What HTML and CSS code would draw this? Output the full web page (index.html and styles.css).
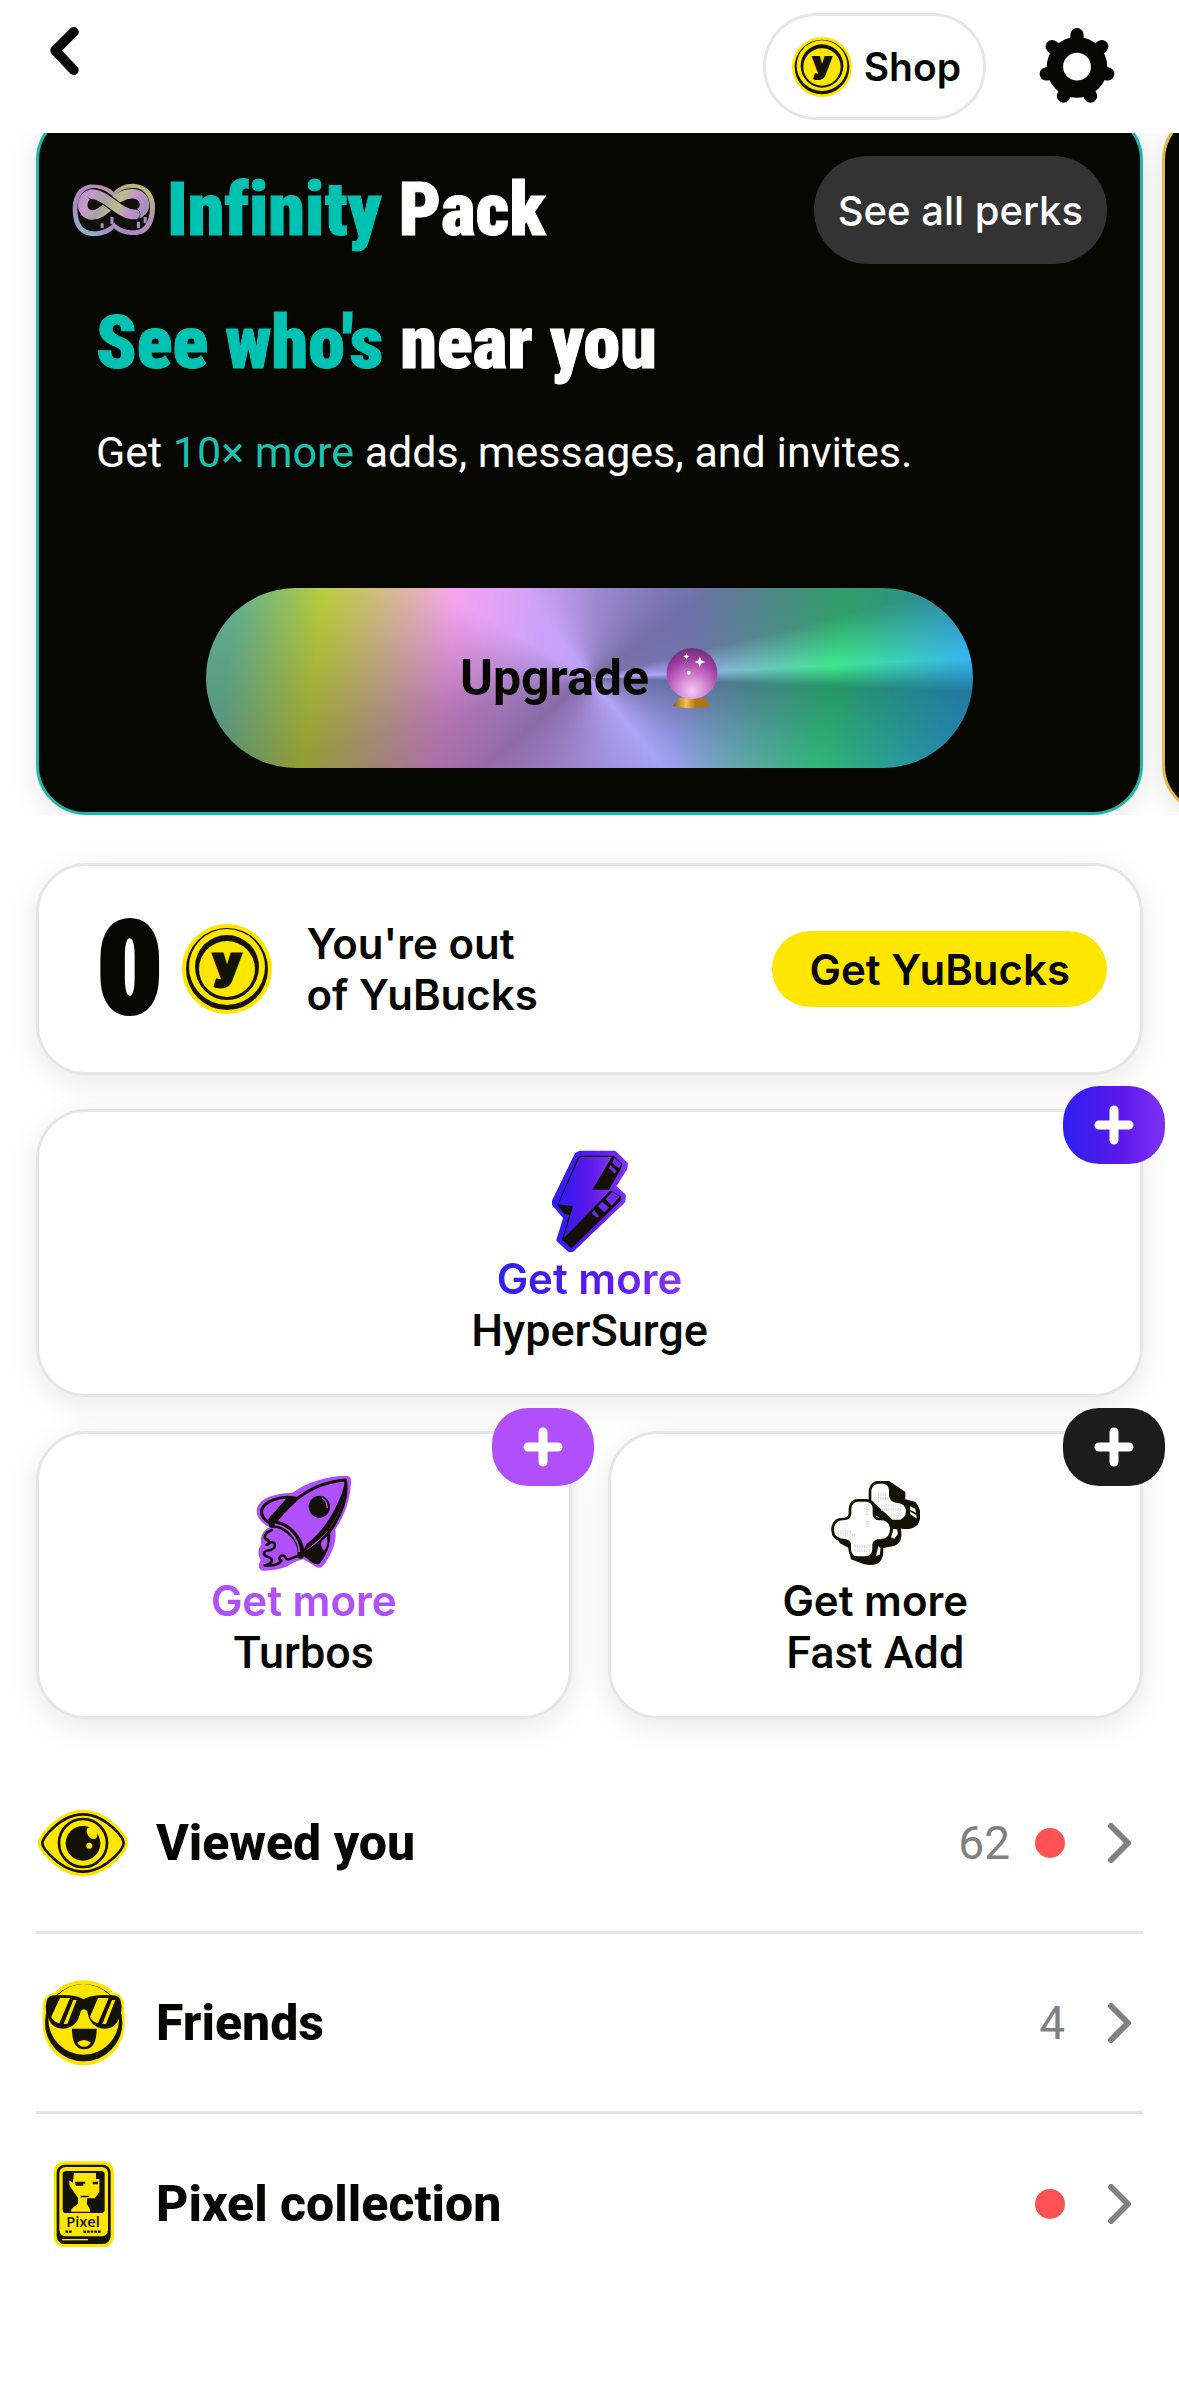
FILE: index.html
```
<!DOCTYPE html>
<html lang="en">
<head>
<meta charset="utf-8">
<meta name="viewport" content="width=device-width, initial-scale=1">
<title>Profile</title>
<link rel="stylesheet" href="styles.css">
</head>
<body>
<svg class="defs" aria-hidden="true">
  <defs>
    <linearGradient id="violet" x1="0" x2="1"><stop offset="0" stop-color="#2d1df2"/><stop offset=".55" stop-color="#5a18ea"/><stop offset="1" stop-color="#7d33f5"/></linearGradient>
    <linearGradient id="holo" gradientUnits="userSpaceOnUse" x1="50" y1="90" x2="270" y2="210"><stop offset="0" stop-color="#a98bb4"/><stop offset=".2" stop-color="#c99ad0"/><stop offset=".36" stop-color="#a9a0a8"/><stop offset=".52" stop-color="#b9c08a"/><stop offset=".68" stop-color="#c58fd0"/><stop offset=".82" stop-color="#9f93b8"/><stop offset="1" stop-color="#b288d6"/></linearGradient>
    <linearGradient id="rim" x1="0" y1="1" x2="1" y2="0"><stop offset="0" stop-color="#7fc4c4"/><stop offset=".3" stop-color="#a48cc4"/><stop offset=".6" stop-color="#b58ab8"/><stop offset="1" stop-color="#b4cc62"/></linearGradient>
    <radialGradient id="orb" cx=".5" cy=".85" r=".9"><stop offset="0" stop-color="#f6c8f4"/><stop offset=".35" stop-color="#cf7fcf"/><stop offset=".7" stop-color="#9a3c9c"/><stop offset="1" stop-color="#6a2a70"/></radialGradient>
    <linearGradient id="gold" x1="0" x2="1"><stop offset="0" stop-color="#8a5a14"/><stop offset=".35" stop-color="#f0c04a"/><stop offset=".6" stop-color="#b07818"/><stop offset="1" stop-color="#a87420"/></linearGradient>
    <symbol id="coin" viewBox="0 0 90 90">
      <circle cx="45" cy="45" r="45" fill="#ffe600"/>
      <circle cx="45" cy="45" r="41" fill="#141200"/>
      <circle cx="45" cy="43" r="38" fill="#ffe600"/>
      <circle cx="45" cy="43" r="32" fill="#141200"/>
      <circle cx="45" cy="45" r="28" fill="#ffe600"/>
      <circle cx="45" cy="45" r="30" fill="none" stroke="#141200" stroke-width="2"/>
      <text x="45" y="54" text-anchor="middle" class="coin-letter">y</text>
    </symbol>
    <symbol id="plus" viewBox="0 0 40 40"><path d="M20 5v30M5 20h30" fill="none" stroke="#fff" stroke-width="9" stroke-linecap="round"/></symbol>
    <symbol id="chevron" viewBox="0 0 24 40"><path d="M4 3l17 17L4 37" fill="none" stroke="#808080" stroke-width="6" stroke-linecap="round" stroke-linejoin="round"/></symbol>
  </defs>
</svg>

<header class="topbar">
  <button class="back" aria-label="Back"><svg viewBox="0 0 32 52"><path d="M26 6L7 25L26 45" fill="none" stroke="#050700" stroke-width="10" stroke-linecap="round" stroke-linejoin="round"/></svg></button>
  <button class="shop"><svg class="shop-coin"><use href="#coin"/></svg>Shop</button>
  <button class="settings" aria-label="Settings">
    <svg viewBox="835 45 230 236" fill="#050700"><circle cx="950" cy="170" r="92"/><g stroke="#050700" stroke-width="40" stroke-linecap="round"><path d="M950 170V71M950 170L1025 107M950 170L1043 190M950 170L991 257M950 170L909 257M950 170L857 190M950 170L875 107"/></g><circle cx="950" cy="168" r="42" fill="#fff"/></svg>
  </button>
</header>

<section class="carousel">
  <article class="pack">
    <div class="pack-head">
      <svg class="pack-icon" viewBox="40 72 248 158">
        <path d="M100 76C130 76 150 86 163 98C178 82 200 72 225 74C262 77 287 105 285 145C284 195 262 226 222 225C195 225 178 218 164 205C150 222 128 228 102 228C62 226 42 195 42 150C42 105 65 76 100 76z" fill="url(#rim)"/>
        <path d="M56 150C56 108 74 88 102 87C132 87 150 100 163 114C180 92 202 84 225 86C254 88 272 112 270 148C268 190 250 212 222 211C196 211 178 203 164 188C150 204 128 214 102 214C70 212 57 188 56 150z" fill="#11110b"/>
        <g fill="none" stroke-linecap="round">
          <path d="M102 104C64 104 60 164 100 166C140 166 164 103 218 103C264 104 266 162 224 164" stroke="url(#holo)" stroke-width="28"/>
          <path d="M102 104C142 104 176 164 224 164" stroke="#11110b" stroke-width="36"/>
          <path d="M98 104C142 104 176 164 226 164" stroke="url(#holo)" stroke-width="29"/>
          <path d="M129 190V204M158 172V192M236 186V204M256 172V190" stroke="#a48cc8" stroke-width="9" stroke-linecap="butt"/>
        </g>
      </svg>
      <h2 class="pack-name"><span class="teal">Infinity</span> Pack</h2>
      <button class="perks">See all perks</button>
    </div>
    <h3 class="pack-title"><span class="teal">See who's</span> near you</h3>
    <p class="pack-text">Get <span class="teal-soft">10× more</span> adds, messages, and invites.</p>
    <button class="upgrade">Upgrade
      <svg class="ball" viewBox="75 45 162 190"><path d="M118 200H196L214 226Q156 240 97 226z" fill="url(#gold)"/><circle cx="156" cy="126" r="78" fill="url(#orb)"/><g fill="#fff"><path d="M180 74L185 86L197 91L185 95L180 106L175 95L163 91L175 86z"/><path d="M139 64l3 7l7 3l-7 3l-3 7l-3-7l-7-3l7-3z"/><circle cx="146" cy="124" r="6"/></g></svg>
    </button>
  </article>
  <article class="pack pack-next" aria-label="Next pack"></article>
</section>

<main class="content">
  <section class="card balance">
    <span class="amount">0</span>
    <svg class="balance-coin"><use href="#coin"/></svg>
    <p class="balance-text">You're out<br>of YuBucks</p>
    <button class="get-bucks">Get YuBucks</button>
  </section>

  <section class="boosts">
    <div class="card boost boost-wide">
      <svg class="boost-icon" width="78" height="104" viewBox="94 50 234 312">
        <path d="M182 60H285L320 94L318 108L284 162L314 190L312 207L158 354L148 354L115 323L136 256L102 216L102 206L170 66z" fill="url(#violet)" stroke="url(#violet)" stroke-width="10" stroke-linejoin="round"/>
        <path d="M184 70H282L308 95L304 110L268 172L305 192L302 206L155 348L127 322L148 248L134 244L113 218L174 76z" fill="#141008"/>
        <path d="M186 74H276L218 172H274L132 318L160 222L116 216L178 78z" fill="url(#violet)"/>
        <path d="M284 76L305 95L298 108L277 92zM272 98L291 116L286 124L268 108zM279 178L300 194L276 220L258 200zM248 208L268 226L254 240L235 222zM224 234L238 252L232 257L216 242z" fill="#6a2cf0"/>
      </svg>
      <p class="more more-hyper">Get more</p>
      <p class="boost-name">HyperSurge</p>
      <button class="add add-hyper" aria-label="Add HyperSurge"><svg><use href="#plus"/></svg></button>
    </div>
    <div class="card boost">
      <svg class="boost-icon" width="96" height="98" viewBox="50 40 288 294">
        <path d="M320 45C337 45 337 60 334 78C330 120 318 160 288 206C292 240 282 270 262 300C250 322 240 326 226 316C212 308 204 302 192 296C160 302 150 318 130 322C112 328 90 330 70 330C56 328 56 312 64 298C54 282 56 262 66 252C60 226 74 208 90 200C62 186 46 160 54 140C64 112 104 98 160 96C205 62 268 46 320 45z" fill="#b050fa"/>
        <path d="M318 58C268 62 220 78 176 112C150 136 120 165 100 195C140 198 180 240 186 284C225 262 262 230 282 196C310 150 326 100 318 58z" fill="#b050fa" stroke="#141008" stroke-width="9" stroke-linejoin="round"/>
        <path d="M318 60C322 110 300 160 268 208C240 238 208 262 184 282L202 250C250 215 290 150 310 90z" fill="#141008"/>
        <path d="M166 112C118 104 76 124 68 146C62 162 76 180 94 188C120 168 140 140 166 112z" fill="#b050fa" stroke="#141008" stroke-width="9"/>
        <path d="M166 110L142 112C122 136 100 160 86 176L100 192C124 170 150 136 166 110z" fill="#141008"/>
        <path d="M272 208C278 250 260 286 240 310C222 316 206 292 186 282C210 262 246 244 272 208z" fill="#141008"/>
        <path d="M262 228C268 246 262 260 254 270C246 262 242 250 248 240z" fill="#b050fa"/>
        <ellipse cx="240" cy="138" rx="32" ry="33" fill="#141008"/><path d="M248 112Q264 122 264 142" fill="none" stroke="#b050fa" stroke-width="4"/>
        <path d="M98 192C140 184 190 238 184 284" fill="none" stroke="#141008" stroke-width="20" stroke-linecap="round"/><path d="M106 192C146 194 178 236 180 274" fill="none" stroke="#b050fa" stroke-width="5"/>
        <path d="M98 208C78 214 72 230 80 236C92 238 92 252 82 252C100 236 112 248 104 262C92 276 74 262 74 280C78 292 96 286 98 298C98 310 78 314 76 314C100 316 118 312 126 300C110 292 132 276 138 290C144 304 156 290 178 286" fill="none" stroke="#141008" stroke-width="8" stroke-linecap="round" stroke-linejoin="round"/>
      </svg>
      <p class="more more-turbo">Get more</p>
      <p class="boost-name">Turbos</p>
      <button class="add add-turbo" aria-label="Add Turbos"><svg><use href="#plus"/></svg></button>
    </div>
    <div class="card boost">
      <svg class="boost-icon" width="90" height="86" viewBox="46 57 270 258" stroke-linejoin="round">
        <g stroke="#141200" stroke-width="8">
        <path d="M190 64H222L268 95V118L300 126C320 150 314 175 306 188C296 200 284 200 268 200L240 196L170 150V90Q172 66 190 64z" fill="#141200"/>
        <path d="M190 64H206Q226 66 227 88V104Q230 120 248 122Q276 124 278 150Q278 172 258 180H232L166 120V88Q170 66 190 64z" fill="#fff"/>
        <path d="M284 132L304 142L310 178L284 160z" fill="#fff" stroke-width="5"/><path d="M284 148L306 160" stroke-width="5"/>
        <path d="M54 205L80 245L106 258L112 292L150 306C190 314 204 300 202 258L240 250C262 240 258 210 250 188L220 176z" fill="#141200"/>
        <path d="M190 250L200 262L198 282L180 290zM234 200L250 204L252 220L240 236L226 230z" fill="#fff" stroke-width="5"/>
        <path d="M128 118H156Q176 120 178 142V160Q180 174 194 174Q228 172 230 204Q230 236 200 238Q178 238 177 250V264Q176 290 150 290H128Q106 288 105 264V250Q104 240 90 238Q54 236 54 206Q54 174 86 174Q104 174 106 158V142Q108 120 128 118z" fill="#fff"/>
        </g>
        <g fill="none" stroke="#d9d9d9" stroke-width="10" stroke-dasharray="3 4"><path d="M158 130V162M158 180V200M70 212H112M70 222H124M120 256H166M120 268H166M190 100H216M190 112H220M200 134H262M200 146H262M236 162H264"/></g>
      </svg>
      <p class="more">Get more</p>
      <p class="boost-name">Fast Add</p>
      <button class="add add-fast" aria-label="Add Fast Add"><svg><use href="#plus"/></svg></button>
    </div>
  </section>

  <nav class="list">
    <a class="row" href="#viewed">
      <svg class="row-icon" viewBox="52 19 282 282">
        <path d="M57 160Q60 140 82 118Q135 60 193 60Q252 60 305 118Q328 142 328 160Q328 178 305 202Q252 260 193 260Q135 260 82 202Q58 178 57 160z" fill="#ffe600"/>
        <path d="M71 160Q72 148 90 128Q140 74 193 74Q246 74 297 128Q314 146 315 160Q314 174 297 192Q246 246 193 246Q140 246 90 192Q72 174 71 160z" fill="none" stroke="#141200" stroke-width="8"/>
        <circle cx="193" cy="160" r="72" fill="none" stroke="#141200" stroke-width="8"/><circle cx="193" cy="161" r="52" fill="#141200"/>
        <ellipse cx="220" cy="130" rx="14" ry="20" transform="rotate(-35 220 130)" fill="#ffe600"/><circle cx="212" cy="168" r="9" fill="#ffe600"/>
      </svg>
      <span class="row-label">Viewed you</span><span class="count">62</span><i class="dot"></i><svg class="chevron"><use href="#chevron"/></svg>
    </a>
    <a class="row" href="#friends">
      <svg class="row-icon" viewBox="52 560 282 282">
        <path d="M195 573C235 573 268 590 285 610C312 614 318 636 316 660Q320 680 318 705A123 123 0 0 1 72 705Q70 680 73 660C70 636 80 614 108 610C124 590 155 573 195 573z" fill="#ffe600"/>
        <circle cx="195" cy="700" r="116" fill="#141200"/><circle cx="195" cy="690" r="106" fill="#ffe600"/>
        <path d="M84 634Q88 618 112 618Q150 614 178 622L195 630L212 622Q240 614 278 618Q302 618 306 634Q314 664 298 694Q286 718 256 718Q214 716 206 666Q195 654 186 666Q176 716 134 718Q104 718 92 694Q76 664 84 634z" fill="#141200"/>
        <path d="M124 626H154L122 702Q102 696 98 682zM164 632H174L146 704H135zM238 626H270L238 702Q218 696 214 682zM280 632H290L262 704H251z" fill="#ffe600"/>
        <path d="M160 718H234Q234 780 196 780Q160 780 160 718z" fill="#141200"/><path d="M176 760Q196 744 216 760Q210 772 196 772Q182 772 176 760z" fill="#ffe600"/>
      </svg>
      <span class="row-label">Friends</span><span class="count">4</span><svg class="chevron"><use href="#chevron"/></svg>
    </a>
    <a class="row" href="#pixels">
      <svg class="row-icon" viewBox="52 1100 282 282">
        <rect x="105" y="1113" width="181" height="257" rx="32" fill="#ffe600"/><rect x="114" y="1123" width="162" height="238" rx="24" fill="#141200"/><rect x="122" y="1130" width="146" height="208" rx="18" fill="#ffe600"/>
        <rect x="132" y="1142" width="126" height="126" rx="10" fill="#141200"/>
        <path d="M166 1148H232V1166H242V1206L228 1224H206L204 1240L214 1256V1264H158V1256L178 1240V1222L166 1206L152 1184V1170L162 1178z" fill="#ffe600"/>
        <path d="M168 1174H200V1180H194V1186H172zM222 1174H238V1182H222zM186 1216H212V1221H186z" fill="#141200"/>
        <text x="193" y="1311" text-anchor="middle" class="pixel-word">Pixel</text>
        <path d="M140 1324H160M194 1324H248" stroke="#141200" stroke-width="7" stroke-dasharray="8 3"/><path d="M130 1348H208" stroke="#ffe600" stroke-width="4"/>
      </svg>
      <span class="row-label">Pixel collection</span><i class="dot"></i><svg class="chevron"><use href="#chevron"/></svg>
    </a>
  </nav>
</main>
</body>
</html>
```
FILE: styles.css
```
* { box-sizing: border-box; }
body { margin: 0; background: #fff; color: #050700; font-family: Inter, "Liberation Sans", sans-serif; font-size: 40px; }
h2, h3, p { margin: 0; }
button { border: 0; padding: 0; background: none; color: inherit; font: inherit; cursor: pointer; }
a { color: inherit; text-decoration: none; }
svg { display: block; flex: none; }
.defs { position: absolute; width: 0; height: 0; }
.coin-letter { font: 900 44px Inter, sans-serif; fill: #141200; stroke: #141200; stroke-width: 3px; }
.pixel-word { font: 600 44px "Open Sans", sans-serif; fill: #141200; }

.topbar { display: flex; align-items: flex-start; height: 133px; padding: 13px 64px 0 48px; }
.back { margin: 13px auto 0 0; }
.back svg { width: 32px; height: 51px; }
.shop { display: flex; align-items: center; gap: 12px; height: 107px; padding: 0 22px 0 26px; border: 3px solid #e6e6e6; border-radius: 54px; font-weight: 600; font-size: 39px; }
.shop-coin { width: 60px; height: 60px; }
.settings { margin: 13px 0 0 53px; }
.settings svg { width: 76px; height: 78px; }

.carousel { display: flex; gap: 19px; padding: 0 36px; overflow: hidden; }
.pack { flex: 0 0 100%; margin-top: -23px; padding: 43px 33px 44px; border: 3px solid #1fb8a8; border-radius: 50px; background: #050700; color: #fff; box-shadow: 0 6px 30px rgba(0, 0, 0, .1); }
.pack-next { border-color: #e8b84a; }
.pack-head { display: flex; align-items: center; }
.pack-icon { width: 84px; height: 54px; }
.pack-name, .pack-title { font: 900 74px/80px "Roboto Condensed", "Open Sans Condensed", sans-serif; font-variant-ligatures: none; -webkit-text-stroke: 1px; }
.pack-name { margin: 0 auto 0 11px; }
.teal { color: #00c2b2; }
.teal-soft { color: #1fbfb0; }
.perks { height: 108px; padding: 0 24px; border-radius: 54px; background: #333; font-weight: 500; }
.pack-title { margin: 39px 24px 0; }
.pack-text { margin: 39px 24px 0; font: 400 43px/60px Roboto, sans-serif; }
.upgrade { display: flex; align-items: center; justify-content: center; gap: 16px; width: calc(100% - 268px); height: 180px; margin: 106px auto 0; border-radius: 90px; color: #050700; font: 700 50px/60px Roboto, sans-serif;
  background: conic-gradient(rgba(0,0,0,.14) 0deg, rgba(20,20,30,.36) 55deg, rgba(20,20,30,.34) 76deg, rgba(0,0,0,0) 87deg, rgba(0,30,40,.4) 92deg, rgba(0,30,40,.25) 110deg, rgba(0,0,0,0) 140deg, rgba(30,10,30,.36) 230deg, rgba(30,10,30,.3) 255deg, rgba(0,0,0,0) 300deg, rgba(0,0,0,0) 325deg, rgba(0,0,0,.14) 360deg),
    linear-gradient(97deg, #6cc49c 4%, #c6de3c 15%, #f4a2f0 32%, #caa2f8 43%, #a0a4f4 62%, #3ee88e 81%, #38b8ee 97%); }
.ball { width: 54px; height: 62px; }

.content { padding: 48px 36px 100px; }
.card { border: 3px solid #e6e6e6; border-radius: 50px; background: #fff; box-shadow: 0 8px 32px rgba(0, 0, 0, .09); }
.balance { display: flex; align-items: center; height: 212px; padding: 0 33px 0 58px; font-size: 42px; font-weight: 600; }
.amount { font: 900 128px/140px "Roboto Condensed", sans-serif; -webkit-text-stroke: 4px; }
.balance-coin { width: 90px; height: 90px; margin: 0 34px 0 20px; }
.balance-text { line-height: 51px; }
.get-bucks { height: 76px; margin-left: auto; padding: 0 37px; border-radius: 38px; background: #ffe600; font-weight: 600; }

.boosts { display: grid; grid-template-columns: 1fr 1fr; gap: 34px 36px; margin-top: 34px; }
.boost { position: relative; display: flex; flex-direction: column; align-items: center; height: 288px; padding: 36px 0; }
.boost-wide { grid-column: 1 / -1; }
.boost-icon { margin: auto; }
.more { font-size: 42px; line-height: 50px; font-weight: 600; }
.more-hyper { background: linear-gradient(90deg, #2d22f0, #5a18ea 60%, #8838f5); background-clip: text; color: transparent; }
.more-turbo { color: #b050fa; }
.boost-name { font: 500 45px/54px Roboto, sans-serif; }
.add { position: absolute; top: -26px; right: -25px; display: grid; place-items: center; width: 102px; height: 78px; border-radius: 36px; }
.add svg { width: 40px; height: 40px; }
.add-hyper { background: linear-gradient(90deg, #2d20f2, #5a18ea 55%, #8030f2); }
.add-turbo { background: #b050fa; }
.add-fast { background: #1c1c1a; }

.list { margin-top: 35px; }
.row { display: flex; align-items: center; height: 180px; padding-right: 12px; border-bottom: 3px solid #e4e4e4; }
.row:last-child { border-bottom: 0; }
.row-icon { width: 94px; height: 94px; }
.row-label { margin: 0 auto 0 26px; font: 800 50px/60px Roboto, sans-serif; }
.count { font: 400 46px/54px Roboto, sans-serif; color: #808080; }
.dot { width: 30px; height: 30px; margin-left: 25px; border-radius: 50%; background: #ff5252; }
.chevron { width: 24px; height: 40px; margin-left: 42px; }
```
